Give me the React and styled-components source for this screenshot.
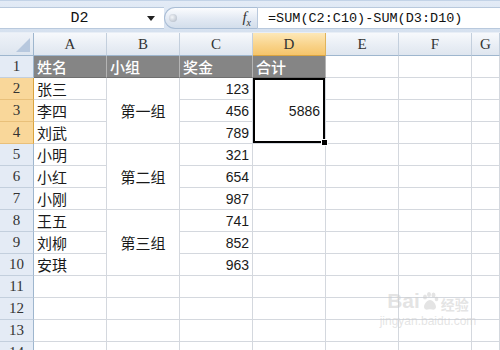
import styled, { createGlobalStyle } from "styled-components";

const GlobalStyle = createGlobalStyle`
  html, body {
    margin: 0;
    padding: 0;
    background: #ffffff;
    overflow: hidden;
  }
`;

const Page = styled.div`
  position: relative;
  width: 500px;
  height: 350px;
  overflow: hidden;
  background: #ffffff;
`;

const FormulaBar = styled.div`
  display: flex;
  align-items: stretch;
  height: 32px;
  box-sizing: border-box;
  padding: 6px 0 3px 0;
  background: linear-gradient(#e3ebf6, #d6e1ef);
  border-top: 1px solid #c3d3e7;
`;

const NameBox = styled.div`
  display: flex;
  align-items: center;
  width: 164px;
  background: #ffffff;
  border-top: 1px solid #b9c9dd;
  border-bottom: 1px solid #b9c9dd;
  font-family: "Liberation Mono", monospace;
  font-size: 15px;
  color: #111;
`;

const NameText = styled.span`
  flex: 1;
  text-align: center;
  padding-left: 12px;
`;

const DropArrow = styled.span`
  width: 0;
  height: 0;
  margin-right: 9px;
  border-left: 4px solid transparent;
  border-right: 4px solid transparent;
  border-top: 5px solid #222;
`;

const FxPill = styled.div`
  display: flex;
  align-items: center;
  justify-content: space-between;
  width: 93px;
  box-sizing: border-box;
  padding: 0 6px 0 4px;
  border: 1px solid #a9bdd5;
  border-right: none;
  border-radius: 12px 0 0 12px;
  background: linear-gradient(#fbfcfe, #e2e9f3 55%, #d3deeb);
`;

const PillDot = styled.span`
  width: 8px;
  height: 8px;
  border-radius: 50%;
  background: radial-gradient(circle at 40% 40%, #f4f6f9, #aab4c2);
`;

const FxLabel = styled.span`
  font-family: "Liberation Serif", serif;
  font-style: italic;
  font-size: 15px;
  color: #333;

  sub {
    font-size: 10px;
  }
`;

const FormulaInput = styled.div`
  flex: 1;
  display: flex;
  align-items: center;
  padding-left: 10px;
  background: #ffffff;
  border: 1px solid #b9c9dd;
  border-right: none;
  font-family: "Liberation Mono", monospace;
  font-size: 13.5px;
  color: #111;
`;

const Sheet = styled.div`
  display: grid;
  grid-template-columns: 34px repeat(6, 73px) 1fr;
  grid-template-rows: 23px repeat(14, 22px);
  border-top: 1px solid #e8eef6;
`;

const Cell = styled.div`
  grid-row: ${(p) => p.$row} / span ${(p) => p.$span || 1};
  grid-column: ${(p) => p.$col};
  display: flex;
  align-items: center;
  justify-content: ${(p) =>
    p.$align === "right" ? "flex-end" : p.$align === "center" ? "center" : "flex-start"};
  box-sizing: border-box;
  padding: 0 3px;
  border-right: 1px solid #d4d8de;
  border-bottom: 1px solid #d4d8de;
  font-family: ${(p) =>
    p.$num ? '"Liberation Sans", Arial, sans-serif' : '"Noto Sans CJK SC", sans-serif'};
  font-size: ${(p) => (p.$num ? "14px" : "15px")};
  color: #1a1a1a;
  white-space: nowrap;
`;

const TitleCell = styled(Cell)`
  background: #858585;
  color: #ffffff;
  font-weight: 500;
  border-right: 1px solid #b4b4b4;
  border-bottom: 1px solid #6f6f6f;
`;

const SelectedCell = styled(Cell)`
  position: relative;
  box-shadow: inset 0 0 0 2px #000;
  padding-right: 5px;
`;

const FillHandle = styled.span`
  position: absolute;
  right: -3px;
  bottom: -3px;
  width: 5px;
  height: 5px;
  background: #000;
  border: 1px solid #fff;
`;

const Corner = styled.div`
  position: relative;
  grid-row: 1;
  grid-column: 1;
  background: linear-gradient(#eef2f8, #dde5ef);
  border-right: 1px solid #9eb6ce;
  border-bottom: 1px solid #9eb6ce;
`;

const CornerTriangle = styled.span`
  position: absolute;
  right: 3px;
  bottom: 3px;
  width: 0;
  height: 0;
  border-left: 14px solid transparent;
  border-bottom: 14px solid #b7c8de;
`;

const ColHeader = styled.div`
  grid-row: 1;
  grid-column: ${(p) => p.$col};
  display: flex;
  align-items: center;
  justify-content: center;
  box-sizing: border-box;
  border-right: 1px solid ${(p) => (p.$active ? "#e0b45c" : "#c3cfdd")};
  border-bottom: 1px solid ${(p) => (p.$active ? "#d9a441" : "#9eb6ce")};
  background: ${(p) =>
    p.$active
      ? "linear-gradient(#fde8b8, #f9d38a 55%, #f6c56b)"
      : "linear-gradient(#f7f9fc, #e9eef5 55%, #dfe6ef)"};
  font-family: "Liberation Serif", serif;
  font-size: 15px;
  color: #333;
`;

const RowHeader = styled.div`
  grid-row: ${(p) => p.$row};
  grid-column: 1;
  display: flex;
  align-items: center;
  justify-content: center;
  box-sizing: border-box;
  border-right: 1px solid ${(p) => (p.$active ? "#d9a441" : "#9eb6ce")};
  border-bottom: 1px solid ${(p) => (p.$active ? "#e9c07a" : "#c3cfdd")};
  background: ${(p) => (p.$active ? "#f9d79a" : "#e4ebf5")};
  font-family: "Liberation Serif", serif;
  font-size: 15px;
  color: #333;
`;

const Watermark = styled.div`
  position: absolute;
  left: 384px;
  top: 290px;
  width: 88px;
  display: flex;
  flex-direction: column;
  align-items: center;
  color: rgba(205, 205, 205, 0.55);
  pointer-events: none;
`;

const WatermarkLogo = styled.div`
  display: flex;
  align-items: flex-end;
  font-family: "Liberation Sans", sans-serif;
  font-weight: bold;
  font-size: 21px;
  line-height: 1;
`;

const WatermarkCn = styled.span`
  font-family: "Noto Sans CJK SC", sans-serif;
  font-size: 14px;
  margin-left: 1px;
`;

const WatermarkUrl = styled.div`
  font-family: "Liberation Sans", sans-serif;
  font-size: 12px;
  margin-top: 3px;
`;

const COLS = ["A", "B", "C", "D", "E", "F", "G"];

const people = [
  ["张三", "123"],
  ["李四", "456"],
  ["刘武", "789"],
  ["小明", "321"],
  ["小红", "654"],
  ["小刚", "987"],
  ["王五", "741"],
  ["刘柳", "852"],
  ["安琪", "963"],
];

const groups = ["第一组", "第二组", "第三组"];
const titles = ["姓名", "小组", "奖金", "合计"];

const Paw = () => (
  <svg width="20" height="20" viewBox="0 0 20 20" fill="currentColor">
    <ellipse cx="5" cy="6" rx="2" ry="2.6" />
    <ellipse cx="9" cy="3.5" rx="2" ry="2.6" />
    <ellipse cx="13.5" cy="4" rx="2" ry="2.6" />
    <ellipse cx="16.5" cy="8" rx="1.8" ry="2.3" />
    <path d="M10 9c-3 0-6 4-6 7 0 2 2 3 4 2.5 1-.3 3-.3 4 0 2 .5 4-.5 4-2.5 0-3-3-7-6-7z" />
  </svg>
);

const App = () => {
  const cells = [];

  // blank grid cells (rows 1-14, columns A-G), skipping merged / filled ones
  for (let r = 1; r <= 14; r++) {
    for (let c = 0; c < 7; c++) {
      const inData = r >= 1 && r <= 10 && c <= 2;
      const inTitle = r === 1 && c <= 3;
      const inSel = c === 3 && r >= 2 && r <= 4;
      if (inData || inTitle || inSel) continue;
      cells.push(<Cell key={`b${r}-${c}`} $row={r + 1} $col={c + 2} />);
    }
  }

  return (
    <Page>
      <GlobalStyle />
      <FormulaBar>
        <NameBox>
          <NameText>D2</NameText>
          <DropArrow />
        </NameBox>
        <FxPill>
          <PillDot />
          <FxLabel>
            f<sub>x</sub>
          </FxLabel>
        </FxPill>
        <FormulaInput>=SUM(C2:C10)-SUM(D3:D10)</FormulaInput>
      </FormulaBar>

      <Sheet>
        <Corner>
          <CornerTriangle />
        </Corner>
        {COLS.map((l, i) => (
          <ColHeader key={l} $col={i + 2} $active={l === "D"}>
            {l}
          </ColHeader>
        ))}
        {Array.from({ length: 14 }, (_, i) => (
          <RowHeader key={i} $row={i + 2} $active={i + 1 >= 2 && i + 1 <= 4}>
            {i + 1}
          </RowHeader>
        ))}

        {titles.map((t, i) => (
          <TitleCell key={t} $row={2} $col={i + 2}>
            {t}
          </TitleCell>
        ))}

        {people.map(([name], i) => (
          <Cell key={name} $row={i + 3} $col={2}>
            {name}
          </Cell>
        ))}
        {groups.map((g, i) => (
          <Cell key={g} $row={3 + i * 3} $span={3} $col={3} $align="center">
            {g}
          </Cell>
        ))}
        {people.map(([, amount], i) => (
          <Cell key={amount} $row={i + 3} $col={4} $align="right" $num>
            {amount}
          </Cell>
        ))}

        <SelectedCell $row={3} $span={3} $col={5} $align="right" $num>
          5886
          <FillHandle />
        </SelectedCell>

        {cells}
      </Sheet>

      <Watermark>
        <WatermarkLogo>
          Bai
          <Paw />
          <WatermarkCn>经验</WatermarkCn>
        </WatermarkLogo>
        <WatermarkUrl>jingyan.baidu.com</WatermarkUrl>
      </Watermark>
    </Page>
  );
};

export default App;
